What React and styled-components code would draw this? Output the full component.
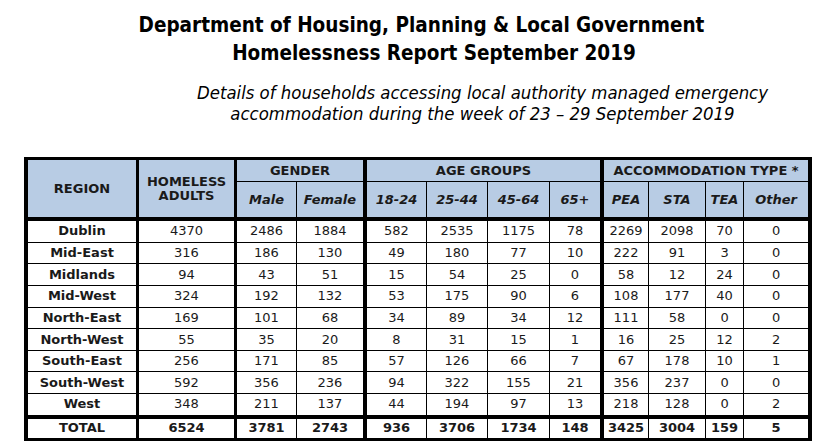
import React from "react";
import styled, { createGlobalStyle } from "styled-components";

const GlobalStyle = createGlobalStyle`
  html, body {
    margin: 0;
    padding: 0;
    background: #fff;
  }
  body {
    width: 825px;
    height: 442px;
    overflow: hidden;
    font-family: "DejaVu Sans", Verdana, sans-serif;
    color: #111;
  }
`;

const cols = [111, 98, 60, 70, 60, 61, 62, 54, 45, 57, 38, 68];
const rightBorders = [3, 3, 1, 4, 1, 1, 1, 4, 1, 1, 1, 4];

const rows = [
  ["Dublin", 4370, 2486, 1884, 582, 2535, 1175, 78, 2269, 2098, 70, 0],
  ["Mid-East", 316, 186, 130, 49, 180, 77, 10, 222, 91, 3, 0],
  ["Midlands", 94, 43, 51, 15, 54, 25, 0, 58, 12, 24, 0],
  ["Mid-West", 324, 192, 132, 53, 175, 90, 6, 108, 177, 40, 0],
  ["North-East", 169, 101, 68, 34, 89, 34, 12, 111, 58, 0, 0],
  ["North-West", 55, 35, 20, 8, 31, 15, 1, 16, 25, 12, 2],
  ["South-East", 256, 171, 85, 57, 126, 66, 7, 67, 178, 10, 1],
  ["South-West", 592, 356, 236, 94, 322, 155, 21, 356, 237, 0, 0],
  ["West", 348, 211, 137, 44, 194, 97, 13, 218, 128, 0, 2],
];

const total = ["TOTAL", 6524, 3781, 2743, 936, 3706, 1734, 148, 3425, 3004, 159, 5];

const subHeads = ["Male", "Female", "18-24", "25-44", "45-64", "65+", "PEA", "STA", "TEA", "Other"];

export default function App() {
  return (
    <>
      <GlobalStyle />
      <Page>
        <Titles>
          <Title $shift={18}>Department of Housing, Planning &amp; Local Government</Title>
          <Title $shift={43}>Homelessness Report September 2019</Title>
        </Titles>
        <Subtitle>
          Details of households accessing local authority managed emergency
          <br />
          accommodation during the week of 23 – 29 September 2019
        </Subtitle>
        <Table>
          <colgroup>
            {cols.map((w, i) => (
              <col key={i} style={{ width: w }} />
            ))}
          </colgroup>
          <thead>
            <tr>
              <HeadCell rowSpan={2} $right={3} $bottom={4}>
                REGION
              </HeadCell>
              <HeadCell rowSpan={2} $right={3} $bottom={4}>
                HOMELESS
                <br />
                ADULTS
              </HeadCell>
              <GroupCell colSpan={2} $right={4}>GENDER</GroupCell>
              <GroupCell colSpan={4} $right={4}>AGE GROUPS</GroupCell>
              <GroupCell colSpan={4} $right={4}>ACCOMMODATION TYPE *</GroupCell>
            </tr>
            <tr>
              {subHeads.map((h, i) => (
                <SubHeadCell key={h} $right={rightBorders[i + 2]} $bottom={4}>
                  {h}
                </SubHeadCell>
              ))}
            </tr>
          </thead>
          <tbody>
            {rows.map((r, ri) => {
              const last = ri === rows.length - 1;
              return (
                <BodyRow key={r[0]} $last={last}>
                  {r.map((v, i) => (
                    <Cell key={i} $right={rightBorders[i]} $bottom={last ? 4 : 1} $bold={i === 0}>
                      {v}
                    </Cell>
                  ))}
                </BodyRow>
              );
            })}
            <TotalRow>
              {total.map((v, i) => (
                <Cell key={i} $right={rightBorders[i]} $bottom={3} $bold>
                  {v}
                </Cell>
              ))}
            </TotalRow>
          </tbody>
        </Table>
      </Page>
    </>
  );
}

const Page = styled.div`
  display: flex;
  flex-direction: column;
  width: 825px;
`;

const Titles = styled.div`
  padding-top: 11px;
  display: flex;
  flex-direction: column;
`;

const Title = styled.div`
  font-family: "DejaVu Sans Condensed", "DejaVu Sans", sans-serif;
  font-stretch: condensed;
  font-weight: bold;
  font-size: 20.5px;
  line-height: 28px;
  text-align: center;
  padding-left: ${(p) => p.$shift}px;
  color: #000;
`;

const Subtitle = styled.div`
  margin-top: 15px;
  padding-left: 140px;
  font-family: "DejaVu Sans Condensed", "DejaVu Sans", sans-serif;
  font-stretch: condensed;
  font-style: italic;
  font-weight: normal;
  font-size: 18.4px;
  line-height: 21px;
  text-align: center;
  color: #000;
`;

const Table = styled.table`
  margin-top: 33px;
  margin-left: 24px;
  width: 788px;
  table-layout: fixed;
  border-collapse: separate;
  border-spacing: 0;
  border-left: 4px solid #000;
  border-top: 3px solid #000;
  font-size: 13px;
  box-sizing: border-box;

  th, td {
    box-sizing: border-box;
    padding: 0;
    text-align: center;
    vertical-align: middle;
    border-style: solid;
    border-color: #000;
    border-left-width: 0;
    border-top-width: 0;
  }
`;

const HeadCell = styled.th`
  background: #b8cce4;
  color: #1a1a1a;
  font-weight: bold;
  line-height: 14px;
  border-right-width: ${(p) => p.$right}px;
  border-bottom-width: ${(p) => p.$bottom}px;
`;

const GroupCell = styled(HeadCell)`
  height: 22px;
  border-bottom-width: 1px;
`;

const SubHeadCell = styled(HeadCell)`
  height: 39px;
  font-style: italic;
`;

const BodyRow = styled.tr`
  height: ${(p) => (p.$last ? 24.7 : 21.65)}px;
`;

const TotalRow = styled.tr`
  height: 22px;
`;

const Cell = styled.td`
  font-weight: ${(p) => (p.$bold ? "bold" : "normal")};
  color: #1a1a1a;
  line-height: 14px;
  border-right-width: ${(p) => p.$right}px;
  border-bottom-width: ${(p) => p.$bottom}px;
`;
